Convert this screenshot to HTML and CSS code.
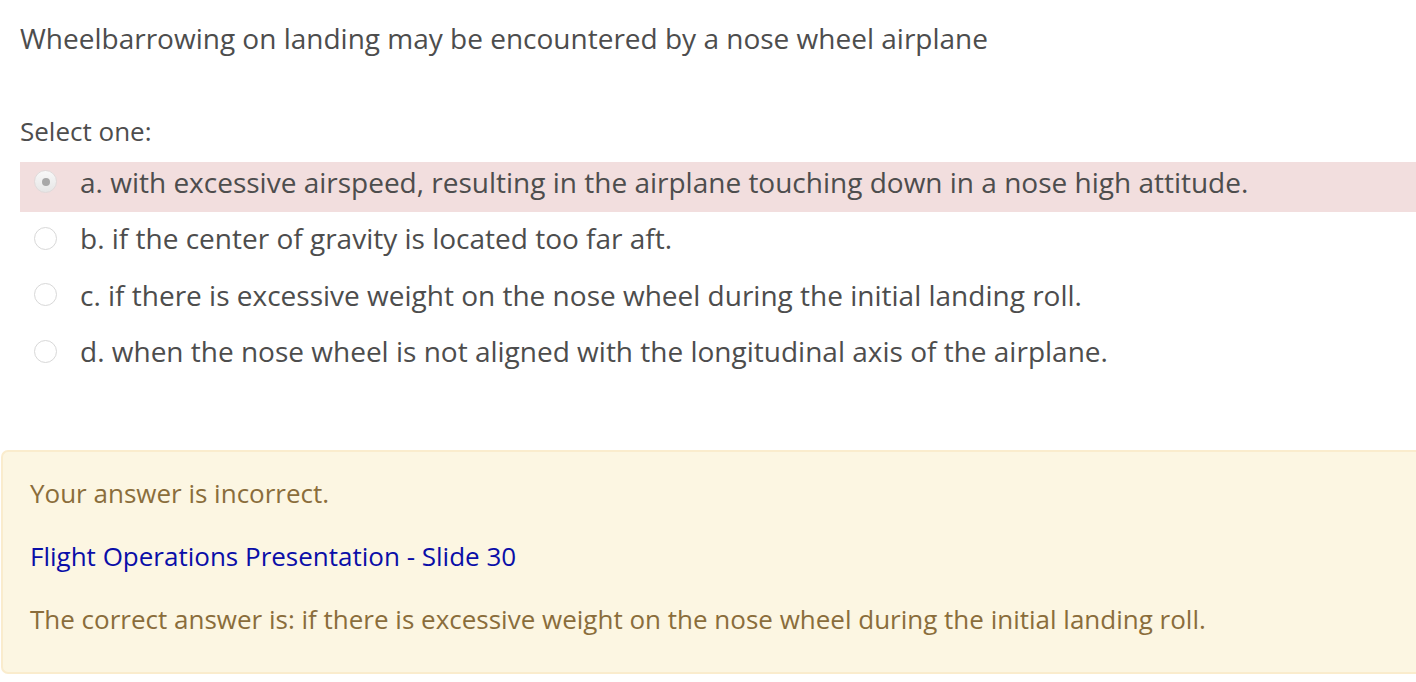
FILE: index.html
```html
<!DOCTYPE html>
<html>
<head>
<meta charset="utf-8">
<link rel="stylesheet" href="styles.css">
</head>
<body>
<div class="question">
  <div class="qtext">Wheelbarrowing on landing may be encountered by a nose wheel airplane</div>
  <div class="prompt">Select one:</div>
  <div class="answers">
    <div class="answer incorrect"><span class="radio checked"></span><span class="label">a. with excessive airspeed, resulting in the airplane touching down in a nose high attitude.</span></div>
    <div class="answer"><span class="radio"></span><span class="label">b. if the center of gravity is located too far aft.</span></div>
    <div class="answer"><span class="radio"></span><span class="label">c. if there is excessive weight on the nose wheel during the initial landing roll.</span></div>
    <div class="answer"><span class="radio"></span><span class="label">d. when the nose wheel is not aligned with the longitudinal axis of the airplane.</span></div>
  </div>
</div>
<div class="feedback">
  <div class="fb-line">Your answer is incorrect.</div>
  <div class="fb-line"><a class="fb-link" href="#">Flight Operations Presentation - Slide 30</a></div>
  <div class="fb-line">The correct answer is: if there is excessive weight on the nose wheel during the initial landing roll.</div>
</div>
</body>
</html>
```
FILE: styles.css
```css
html, body {
  margin: 0;
  padding: 0;
  background: #ffffff;
}
body {
  font-family: "Open Sans", "Liberation Sans", sans-serif;
  font-size: 26px;
  color: #4d4d4d;
  width: 1416px;
  overflow: hidden;
}
.question {
  padding-left: 20px;
}
.qtext {
  padding-top: 19px;
  font-size: 28px;
  line-height: 38px;
  height: 38px;
}
.prompt {
  margin-top: 55px;
  line-height: 38px;
  height: 38px;
}
.answers {
  display: flex;
  flex-direction: column;
  gap: 6.5px;
  margin-top: 12px;
}
.answer {
  display: flex;
  align-items: center;
  height: 50px;
  box-sizing: border-box;
  padding-left: 14px;
  padding-bottom: 11px;
  font-size: 28px;
}
.answer.incorrect {
  background: #f2dede;
}
.radio {
  width: 23px;
  height: 23px;
  border-radius: 50%;
  border: 1px solid #d8d8d8;
  background: #ffffff;
  box-sizing: border-box;
  display: flex;
  align-items: center;
  justify-content: center;
  margin-right: 23px;
  flex: none;
}
.radio.checked {
  background: linear-gradient(#f8f8f8, #e6e6e6);
  border-color: #e0dada;
}
.radio.checked::after {
  content: "";
  width: 8px;
  height: 8px;
  border-radius: 50%;
  background: #a8a8a8;
}
.label {
  white-space: nowrap;
}
.feedback {
  margin-top: 68px;
  margin-left: 1px;
  height: 224px;
  box-sizing: border-box;
  background: #fcf6e2;
  border: 2px solid #faeccd;
  border-right: none;
  border-radius: 7px 0 0 7px;
  padding: 22px 0 0 27px;
  color: #8a6d3b;
  display: flex;
  flex-direction: column;
  gap: 25px;
}
.fb-line {
  line-height: 38px;
}
.fb-link {
  color: #0a0ea8;
  text-decoration: none;
}
```
